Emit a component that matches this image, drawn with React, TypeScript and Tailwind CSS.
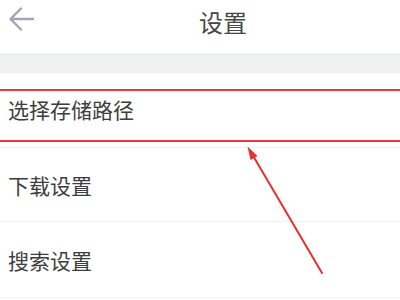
const ITEMS = ["选择存储路径", "下载设置", "搜索设置"];

function BackIcon() {
  return (
    <svg width="28" height="26" viewBox="0 0 28 26" fill="none" className="block">
      <path d="M25 12H3M13 1.5L2.5 12L13 22.5" stroke="#a2a4b5" strokeWidth="2.4" strokeLinecap="round" strokeLinejoin="round" />
    </svg>
  );
}

export default function App() {
  return (
    <div
      className="relative h-[300px] w-[400px] overflow-hidden bg-white"
      style={{ fontFamily: '"Noto Sans CJK SC", "Noto Sans", sans-serif' }}
    >
      <header className="flex h-[53px] items-start pt-[6px]">
        <button className="ml-[8px] mt-[1px]">
          <BackIcon />
        </button>
        <h1 className="ml-[163px] text-[24px] leading-[32px] text-[#474747]">设置</h1>
      </header>
      <div className="h-[20px] bg-[#eff0f0]" />
      <ul>
        {ITEMS.map((item, i) => (
          <li
            key={item}
            className={`flex items-center border-b border-[#f3f3f3] pl-[8px] text-[21px] text-[#3d3d3d] ${
              i === 0 ? "h-[75px]" : i === 1 ? "h-[74px] pt-[2px]" : "h-[76px] pt-[2px]"
            }`}
          >
            {item}
          </li>
        ))}
      </ul>

      {/* annotation box */}
      <div className="absolute left-0 right-0 top-[89px] h-[53px] border-y-[2px] border-[#e83a3a]" />

      {/* annotation arrow */}
      <svg className="absolute left-0 top-0" width="400" height="300" viewBox="0 0 400 300" fill="none">
        <line x1="322" y1="273" x2="252" y2="154" stroke="#e8302f" strokeWidth="2" strokeLinecap="round" />
        <path d="M247.5 146.5L257.5 156L250.5 160Z" fill="#e8302f" />
      </svg>
    </div>
  );
}
